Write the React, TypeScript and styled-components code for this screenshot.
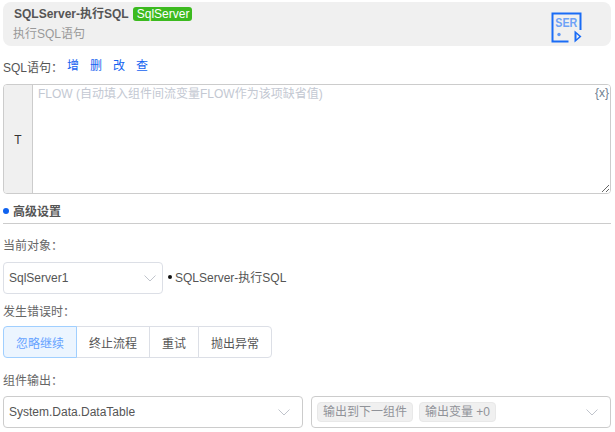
import React from "react";
import styled, { createGlobalStyle } from "styled-components";

const Global = createGlobalStyle`
  html, body { margin: 0; padding: 0; background: #fff; }
  body { font-family: "Liberation Sans", "Noto Sans CJK SC", sans-serif; font-size: 12px; color: #555; }
`;
const Page = styled.div`
  width: 608px; margin-left: 3px; padding-top: 2px; display: flex; flex-direction: column;
`;
const Header = styled.div`
  height: 44px; background: #f0f0f0; border-radius: 8px; display: flex; align-items: center;
  justify-content: space-between; padding: 0 29px 0 10px;
`;
const HeaderText = styled.div`display: flex; flex-direction: column; gap: 6px;`;
const TitleRow = styled.div`display: flex; align-items: center; gap: 4px; height: 14px; margin-left: 1px;`;
const Title = styled.span`font-weight: 700; font-size: 12px; color: #555; line-height: 14px;`;
const Tag = styled.span`
  background: #3cba1f; color: #fff; font-size: 12px; line-height: 14px; height: 14px; padding: 0 3px 0 4px; border-radius: 3px;
`;
const Sub = styled.div`color: #999; font-size: 12px; line-height: 15px;`;
const SqlRow = styled.div`display: flex; align-items: center; height: 16px; margin-top: 12px; color: #555;`;
const SqlLink = styled.a`color: #1463f0; margin-left: ${p => p.$first ? 4 : 11}px; line-height: 16px;`;
const EditorBox = styled.div`
  position: relative; height: 108px; margin-top: 10px; border: 1px solid #ccc; border-radius: 4px; display: flex; overflow: hidden;
`;
const Prefix = styled.div`
  width: 28px; background: #f0f0f0; border-right: 1px solid #ccc; display: flex; align-items: center; justify-content: center; color: #333; padding-top: 1px;
`;
const Editor = styled.textarea`
  flex: 1; border: 0; outline: 0; margin: 0; padding: 2px 5px; font: inherit; line-height: 14px; color: #555; resize: both;
  &::placeholder { color: #c3c8d2; opacity: 1; }
`;
const VarBadge = styled.span`
  position: absolute; right: 1px; top: 1px; font-size: 12px; line-height: 14px; color: #6f8090;
`;
const Section = styled.div`
  display: flex; align-items: center; height: 25px; padding-top: 2px; margin-top: 2px; border-bottom: 1px solid #ccc; box-sizing: content-box;
`;
const Dot = styled.i`width: 6px; height: 6px; border-radius: 50%; background: #0f62ef; margin-right: 4px;`;
const SectionTitle = styled.span`font-weight: 700; color: #555;`;
const FieldLabel = styled.div`color: #666; line-height: 16px; margin-top: ${p => p.$mt}px;`;
const ObjectRow = styled.div`display: flex; align-items: center; margin-top: 8px; height: 32px;`;
const Select = styled.div`
  box-sizing: border-box; width: ${p => p.$w}px; height: 32px; border: 1px solid ${p => p.$soft ? "#dcdfe6" : "#ccc"}; border-radius: 4px;
  display: flex; align-items: center; justify-content: space-between; padding: 0 ${p => p.$pr}px 0 5px; color: #555; background: #fff;
`;
const Chevron = styled.svg`width: 12px; height: 12px; fill: none; stroke: #c0c4cc; stroke-width: 1; flex: none;`;
const Bullet = styled.i`width: 4px; height: 4px; border-radius: 50%; background: #111; margin: 0 3px 0 5px; position: relative; top: -1px;`;
const ObjectName = styled.span`color: #555; position: relative; top: -2px;`;
const ButtonGroup = styled.div`display: flex; margin-top: 6px; height: 32px; width: fit-content;`;
const GroupButton = styled.div`
  box-sizing: border-box; height: 32px; padding: 0 12px; display: flex; align-items: center; justify-content: center;
  border: 1px solid ${p => p.$active ? "#a0cfff" : "#dcdfe6"};
  margin-left: ${p => p.$first ? 0 : -1}px; position: relative; z-index: ${p => p.$active ? 1 : 0};
  background: ${p => p.$active ? "#ecf5ff" : "#fff"}; color: ${p => p.$active ? "#66a3ff" : "#555"};
  border-radius: ${p => p.$first ? "4px 0 0 4px" : p.$last ? "0 4px 4px 0" : "0"};
`;
const OutputRow = styled.div`display: flex; gap: 8px; margin-top: 7px;`;
const Chips = styled.div`display: flex; gap: 6px; margin-left: 0;`;
const Chip = styled.span`background: #f0f0f0; border: 1px solid #e8e8e8; border-radius: 4px; color: #909399; line-height: 18px; padding: 0 5px;`;
const LogoSvg = styled.svg`flex: none; margin-top: 6px;`;

const Down = () => (
  <Chevron viewBox="0 0 12 12"><path d="M0.5 3.5 L6 9 L11.5 3.5" /></Chevron>
);

const Logo = () => (
  <LogoSvg width="31" height="31" viewBox="0 0 31 31">
    <path d="M29.5 18 V1.5 H1.5 V29.5 H17.5" fill="none" stroke="#1a6cf5" strokeWidth="2" />
    <text x="4.3" y="14.5" fontFamily="Liberation Sans, sans-serif" fontWeight="700" fontSize="12.5" fill="#6da2f7" textLength="22" lengthAdjust="spacingAndGlyphs">SER</text>
    <circle cx="8" cy="22.5" r="1.7" fill="#5d97f5" />
    <path d="M23.5 18.5 L30.5 24.5 L23.5 30.5 Z M25.5 22 V27 L28.2 24.5 Z" fill="#1a6cf5" fillRule="evenodd" />
  </LogoSvg>
);

export default function App() {
  return (
    <Page>
      <Global />
      <Header>
        <HeaderText>
          <TitleRow>
            <Title>SQLServer-执行SQL</Title>
            <Tag>SqlServer</Tag>
          </TitleRow>
          <Sub>执行SQL语句</Sub>
        </HeaderText>
        <Logo />
      </Header>
      <SqlRow>
        SQL语句：
        <SqlLink $first>增</SqlLink><SqlLink>删</SqlLink><SqlLink>改</SqlLink><SqlLink>查</SqlLink>
      </SqlRow>
      <EditorBox>
        <Prefix>T</Prefix>
        <Editor placeholder="FLOW (自动填入组件间流变量FLOW作为该项缺省值)" />
        <VarBadge>{"{x}"}</VarBadge>
      </EditorBox>
      <Section><Dot /><SectionTitle>高级设置</SectionTitle></Section>
      <FieldLabel $mt={14}>当前对象：</FieldLabel>
      <ObjectRow>
        <Select $w={160} $pr={6} $soft>SqlServer1<Down /></Select>
        <Bullet />
        <ObjectName>SQLServer-执行SQL</ObjectName>
      </ObjectRow>
      <FieldLabel $mt={10}>发生错误时：</FieldLabel>
      <ButtonGroup>
        <GroupButton $first $active>忽略继续</GroupButton>
        <GroupButton>终止流程</GroupButton>
        <GroupButton>重试</GroupButton>
        <GroupButton $last>抛出异常</GroupButton>
      </ButtonGroup>
      <FieldLabel $mt={15}>组件输出：</FieldLabel>
      <OutputRow>
        <Select $w={300} $pr={12}>System.Data.DataTable<Down /></Select>
        <Select $w={300} $pr={12}>
          <Chips><Chip>输出到下一组件</Chip><Chip>输出变量 +0</Chip></Chips>
          <Down />
        </Select>
      </OutputRow>
    </Page>
  );
}
